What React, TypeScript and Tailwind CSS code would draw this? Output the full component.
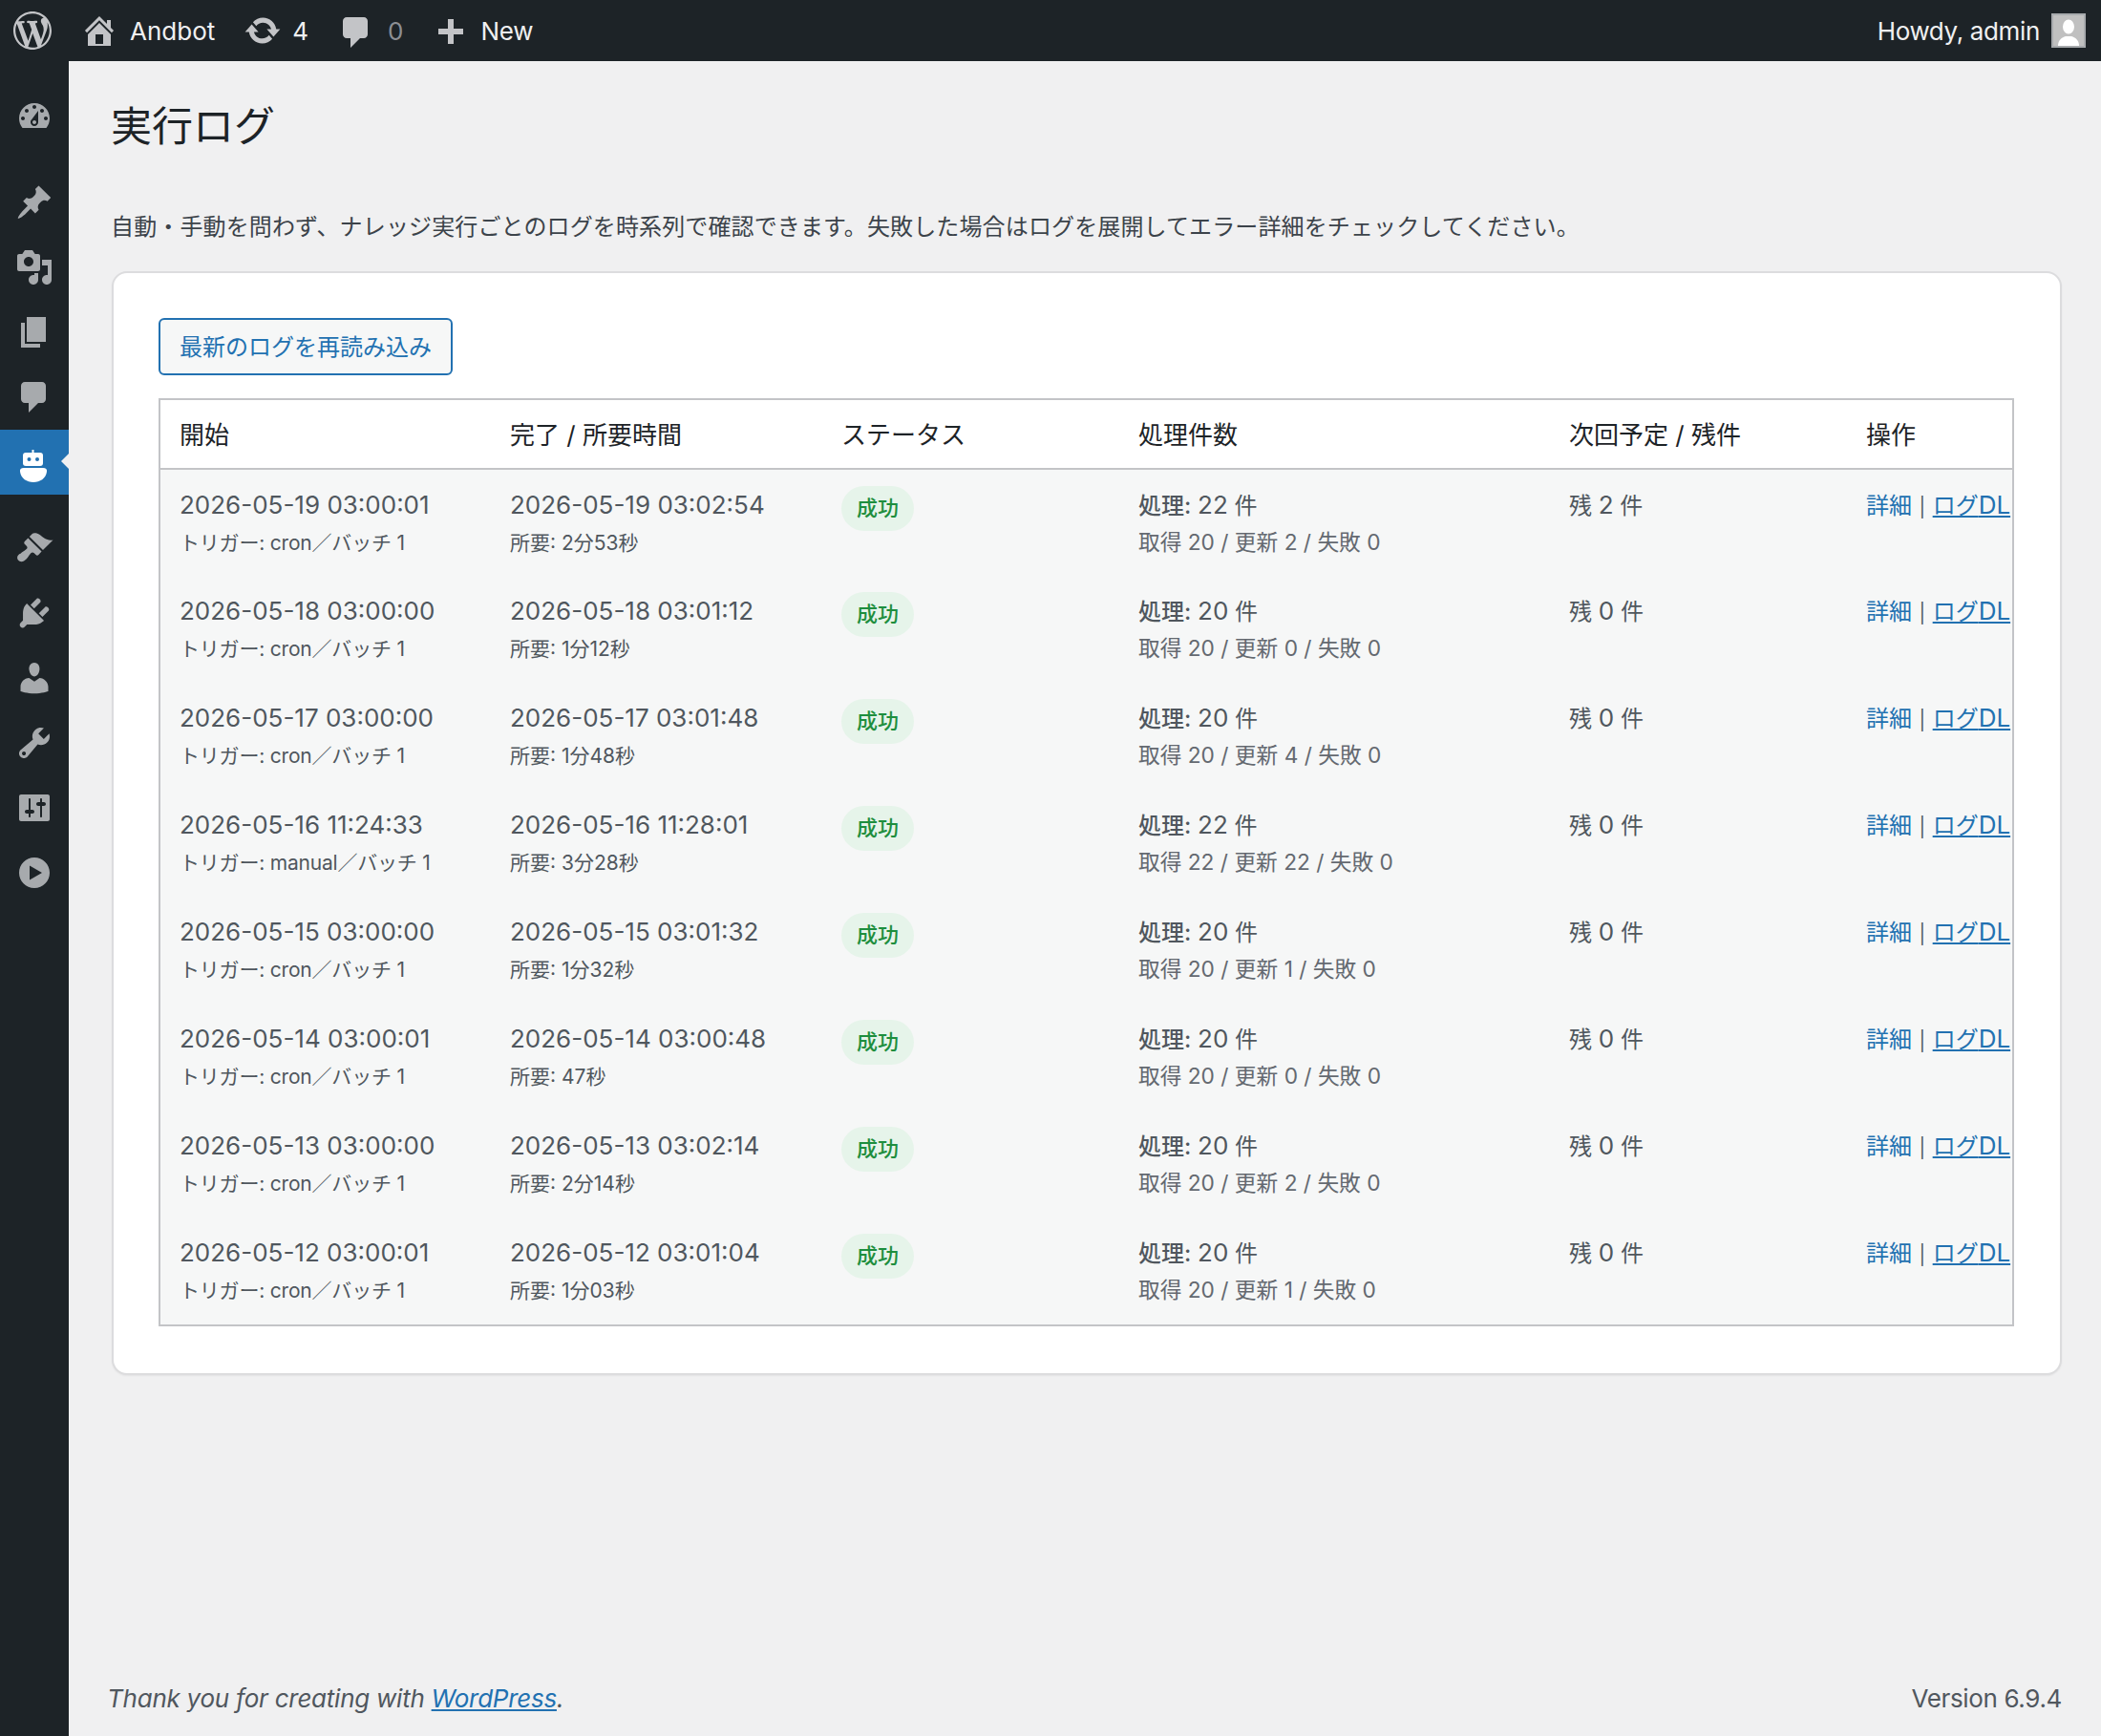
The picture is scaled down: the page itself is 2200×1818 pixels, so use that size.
import type { ReactNode } from 'react'

const DASH = {
  logo: 'M20 10c0-5.51-4.49-10-10-10C4.48 0 0 4.49 0 10c0 5.52 4.48 10 10 10 5.51 0 10-4.48 10-10zM7.78 15.37L4.37 6.22c.55-.02 1.17-.08 1.17-.08.5-.06.44-1.13-.06-1.11 0 0-1.45.11-2.37.11-.18 0-.37 0-.58-.01C4.12 2.69 6.87 1.11 10 1.11c2.33 0 4.45.87 6.05 2.34-.68-.11-1.65.39-1.65 1.58 0 .74.45 1.36.9 2.1.35.61.55 1.36.55 2.46 0 1.49-1.4 5-1.4 5l-3.03-8.37c.54-.02.82-.17.82-.17.5-.05.44-1.25-.06-1.22 0 0-1.44.12-2.38.12-.87 0-2.33-.12-2.33-.12-.5-.03-.56 1.2-.06 1.22l.92.08 1.26 3.41zM17.41 10c.24-.64.74-1.87.43-4.25.7 1.29 1.05 2.71 1.05 4.25 0 3.29-1.73 6.24-4.4 7.78.97-2.59 1.94-5.2 2.92-7.78zM6.1 18.09C3.12 16.65 1.11 13.53 1.11 10c0-1.3.23-2.48.72-3.59C3.25 10.3 4.67 14.2 6.1 18.09zm4.03-6.63l2.58 6.98c-.86.29-1.76.45-2.71.45-.79 0-1.57-.11-2.29-.33.81-2.38 1.62-4.74 2.42-7.1z',
  home: 'M16 8.5l1.53 1.53-1.06 1.06L10 4.62l-6.47 6.47-1.06-1.06L10 2.5l4 4v-2h2v4zm-6-2.46l6 5.99V18H4v-5.97zM12 17v-5H8v5h4z',
  update: 'M10.2 3.28c3.53 0 6.43 2.61 6.92 6h2.08l-3.5 4-3.5-4h2.32c-.45-1.97-2.21-3.45-4.32-3.45-1.45 0-2.73.71-3.54 1.78L4.95 5.66C6.23 4.2 8.11 3.28 10.2 3.28zm-.4 13.44c-3.52 0-6.43-2.61-6.92-6H.8l3.5-4c1.17 1.33 2.33 2.67 3.5 4H5.48c.45 1.97 2.21 3.45 4.32 3.45 1.45 0 2.73-.71 3.54-1.78l1.71 1.95c-1.28 1.46-3.15 2.38-5.25 2.38z',
  comment: 'M5 2h9c1.1 0 2 .9 2 2v7c0 1.1-.9 2-2 2h-2l-5 5v-5H5c-1.1 0-2-.9-2-2V4c0-1.1.9-2 2-2z',
  plus: 'M17 7v3h-5v5H9v-5H4V7h5V2h3v5h5z',
  dashboard: 'M3.76 16h12.48c1.1-1.37 1.76-3.11 1.76-5 0-4.42-3.58-8-8-8s-8 3.58-8 8c0 1.89.66 3.63 1.76 5zM10 4c.55 0 1 .45 1 1s-.45 1-1 1-1-.45-1-1 .45-1 1-1zM6 6c.55 0 1 .45 1 1s-.45 1-1 1-1-.45-1-1 .45-1 1-1zm8 0c.55 0 1 .45 1 1s-.45 1-1 1-1-.45-1-1 .45-1 1-1zm-5.37 5.55L12 7v6c0 1.1-.9 2-2 2s-2-.9-2-2c0-.57.24-1.08.63-1.45zM4 10c.55 0 1 .45 1 1s-.45 1-1 1-1-.45-1-1 .45-1 1-1zm12 0c.55 0 1 .45 1 1s-.45 1-1 1-1-.45-1-1 .45-1 1-1zm-5 3c0-.55-.45-1-1-1s-1 .45-1 1 .45 1 1 1 1-.45 1-1z',
  post: 'M10.44 3.02l1.82-1.82 6.36 6.35-1.83 1.82c-1.05-.68-2.48-.57-3.41.36l-.75.75c-.92.93-1.04 2.35-.35 3.41l-1.83 1.82-2.41-2.41-2.8 2.79c-.42.42-3.38 2.71-3.8 2.29s1.86-3.39 2.28-3.81l2.79-2.79L4.1 9.36l1.83-1.82c1.05.69 2.48.57 3.4-.36l.75-.75c.93-.92 1.05-2.35.36-3.41z',
  media: 'M13 11V4c0-.55-.45-1-1-1h-1.67L9 1H5L3.67 3H2c-.55 0-1 .45-1 1v7c0 .55.45 1 1 1h10c.55 0 1-.45 1-1zM7 4.5c1.38 0 2.5 1.12 2.5 2.5S8.38 9.5 7 9.5 4.5 8.38 4.5 7 5.62 4.5 7 4.5zM14 6h5v10.5c0 1.38-1.12 2.5-2.5 2.5S14 17.88 14 16.5s1.12-2.5 2.5-2.5c.17 0 .34.02.5.05V9h-3V6zm-4 8.05V13h2v3.5c0 1.38-1.12 2.5-2.5 2.5S7 17.88 7 16.5 8.12 14 9.5 14c.17 0 .34.02.5.05z',
  page: 'M6 15V2h10v13H6zm-1 1h8v2H3V5h2v11z',
  appearance: 'M14.48 11.06L7.41 3.99l1.5-1.5c.5-.56 2.3-.47 3.51.32 1.21.8 1.43 1.28 2.91 2.1 1.18.64 2.45 1.26 4.45.85zm-.71.71L6.7 4.7 4.93 6.47c-.39.39-.39 1.02 0 1.41l1.06 1.06c.39.39.39 1.03 0 1.42-.6.6-1.43 1.11-2.21 1.69-.35.26-.7.53-1.01.84C1.43 13.23.5 14.84 1.48 16.25c1.4 1.5 2.97.79 4.3-.54.31-.31.58-.66.84-1.01.58-.78 1.09-1.61 1.69-2.21.39-.39 1.02-.39 1.41 0l1.06 1.06c.39.39 1.02.39 1.41 0z',
  plugins: 'M13.11 4.36L9.87 7.6 8 5.73l3.24-3.24c.35-.34 1.05-.2 1.56.32.52.51.66 1.21.31 1.55zm-8 1.77l.91-1.12 9.01 9.01-1.19.84c-.71.71-2.63 1.16-3.82 1.16H6.14L4.9 17.26c-.59.59-1.54.59-2.12 0-.59-.58-.59-1.53 0-2.12l1.24-1.24v-3.88c0-1.13.4-3.19 1.09-3.89zm7.26 3.97l3.24-3.24c.34-.35 1.04-.21 1.55.31.52.51.66 1.21.31 1.55l-3.24 3.25z',
  users: 'M10 9.25c-2.27 0-2.73-3.44-2.73-3.44C7 4.02 7.82 2 9.97 2c2.16 0 2.98 2.02 2.71 3.81 0 0-.41 3.44-2.68 3.44zm0 2.57L12.72 10c2.39 0 4.52 2.33 4.52 4.53v2.49s-3.65 1.13-7.24 1.13c-3.65 0-7.24-1.13-7.24-1.13v-2.49c0-2.25 1.94-4.48 4.47-4.48z',
  tools: 'M16.68 9.77c-1.34 1.34-3.3 1.67-4.95.99l-5.41 6.52c-.99.99-2.59.99-3.58 0s-.99-2.59 0-3.57l6.52-5.42c-.68-1.65-.35-3.61.99-4.95 1.28-1.28 3.12-1.62 4.72-1.06l-2.89 2.89 2.82 2.82 2.86-2.87c.53 1.58.18 3.39-1.08 4.65zM3.81 16.21c.4.39 1.04.39 1.43 0 .4-.4.4-1.04 0-1.43-.39-.4-1.03-.4-1.43 0-.39.39-.39 1.03 0 1.43z',
  settings: 'M18 16V4c0-.55-.45-1-1-1H3c-.55 0-1 .45-1 1v12c0 .55.45 1 1 1h14c.55 0 1-.45 1-1zM8 11h1c.55 0 1 .45 1 1s-.45 1-1 1H8v1.5c0 .28-.22.5-.5.5s-.5-.22-.5-.5V13H6c-.55 0-1-.45-1-1s.45-1 1-1h1V5.5c0-.28.22-.5.5-.5s.5.22.5.5V11zm5-2h-1c-.55 0-1-.45-1-1s.45-1 1-1h1V5.5c0-.28.22-.5.5-.5s.5.22.5.5V7h1c.55 0 1 .45 1 1s-.45 1-1 1h-1v5.5c0 .28-.22.5-.5.5s-.5-.22-.5-.5V9z',
  play: 'M10 2c4.42 0 8 3.58 8 8s-3.58 8-8 8-8-3.58-8-8 3.58-8 8-8zM7.5 6.2v7.6l6.5-3.8z',
}

const Dash = ({ d, className }: { d: string; className: string }) => (
  <svg viewBox="0 0 20 20" className={className} fill="currentColor" fillRule="evenodd" aria-hidden="true">
    <path d={d} />
  </svg>
)

const RobotIcon = () => (
  <svg viewBox="0 0 40 40" className="h-10 w-10 overflow-visible">
    <rect x="17.500" y="7" width="2" height="4" fill="#fff" />
    <rect x="8" y="10" width="21" height="14" rx="3" fill="#fff" />
    <circle cx="14.500" cy="17" r="2" fill="#2271b1" />
    <circle cx="23" cy="17" r="2" fill="#2271b1" />
    <path d="M9 26h20c3 0 4.500 1.500 4 4C32 37 26 41 19 41S6 37 5 30C4.500 27.500 6 26 9 26z" fill="#fff" />
  </svg>
)

const menuGroups = [
  [DASH.dashboard],
  [DASH.post, DASH.media, DASH.page, DASH.comment, 'robot'],
  [DASH.appearance, DASH.plugins, DASH.users, DASH.tools, DASH.settings, DASH.play],
]

const rows = [
  ['2026-05-19 03:00:01', 'cron', '2026-05-19 03:02:54', '2分53秒', '22', '20', '2', '2'],
  ['2026-05-18 03:00:00', 'cron', '2026-05-18 03:01:12', '1分12秒', '20', '20', '0', '0'],
  ['2026-05-17 03:00:00', 'cron', '2026-05-17 03:01:48', '1分48秒', '20', '20', '4', '0'],
  ['2026-05-16 11:24:33', 'manual', '2026-05-16 11:28:01', '3分28秒', '22', '22', '22', '0'],
  ['2026-05-15 03:00:00', 'cron', '2026-05-15 03:01:32', '1分32秒', '20', '20', '1', '0'],
  ['2026-05-14 03:00:01', 'cron', '2026-05-14 03:00:48', '47秒', '20', '20', '0', '0'],
  ['2026-05-13 03:00:00', 'cron', '2026-05-13 03:02:14', '2分14秒', '20', '20', '2', '0'],
  ['2026-05-12 03:00:01', 'cron', '2026-05-12 03:01:04', '1分03秒', '20', '20', '1', '0'],
]

const Th = ({ children }: { children: ReactNode }) => (
  <th className="pl-5 pt-[2px] text-left text-[26px] leading-[34px] font-normal text-[#1d2327]">{children}</th>
)

// latin runs sit a little larger than the japanese around them
const L = ({ children }: { children: ReactNode }) => <span className="text-[26px]">{children}</span>

const Sidebar = () => (
  <aside className="w-[72px] shrink-0 bg-[#1d2327] pt-6 text-[#a7aaad]">
    {menuGroups.map((group, i) => (
      <div key={i} className="mb-[22px]">
        {group.map((d, j) =>
          d === 'robot' ? (
            <div key={j} className="relative flex h-[68px] items-center justify-center bg-[#2271b1]">
              <RobotIcon />
              <span className="absolute right-0 top-[25px] border-y-[8px] border-r-[8px] border-y-transparent border-r-[#f0f0f1]" />
            </div>
          ) : (
            <div key={j} className="flex h-[68px] items-center justify-center">
              <Dash d={d} className="h-10 w-10" />
            </div>
          ),
        )}
      </div>
    ))}
  </aside>
)

const TopBar = () => (
  <header className="flex h-16 items-center justify-between bg-[#1d2327] pl-[14px] pr-4 text-[26px] text-[#f0f0f1]">
    <div className="flex items-center">
      <Dash d={DASH.logo} className="h-10 w-10 text-[#c3c4c7]" />
      <Dash d={DASH.home} className="ml-[30px] h-10 w-10 text-[#c3c4c7]" />
      <span className="ml-[12px]">Andbot</span>
      <Dash d={DASH.update} className="ml-[30px] h-10 w-10 text-[#c3c4c7]" />
      <span className="ml-[11px]">4</span>
      <Dash d={DASH.comment} className="ml-[30px] mt-1 h-10 w-10 text-[#c3c4c7]" />
      <span className="ml-[13px] text-[#8c8f94]">0</span>
      <Dash d={DASH.plus} className="ml-[29px] mt-2 h-10 w-10 text-[#c3c4c7]" />
      <span className="ml-[12px] tracking-[-0.3px]">New</span>
    </div>
    <div className="flex items-center gap-3">
      <span className="tracking-[-0.35px]">Howdy, admin</span>
      <div className="flex h-9 w-9 items-end justify-center overflow-hidden border-2 border-[#a7aaad] bg-[#c0c0c0]">
        <svg viewBox="0 0 32 32" className="h-8 w-8 text-white" fill="currentColor">
          <ellipse cx="16" cy="12" rx="6" ry="7.500" />
          <path d="M5 32c0-6 4-9 8-10h6c4 1 8 4 8 10z" />
        </svg>
      </div>
    </div>
  </header>
)

export default function App() {
  return (
    <div className="flex min-h-screen flex-col bg-[#f0f0f1] font-['Inter','Noto_Sans_CJK_JP',sans-serif] text-[#3c434a]">
      <TopBar />
      <div className="flex flex-1">
        <Sidebar />
        <main className="flex flex-1 flex-col justify-between pl-[45px] pr-[41px]">
          <div>
            <h1 className="-ml-px mt-[42px] text-[43px] leading-[52px] font-normal text-[#1d2327]">実行ログ</h1>
            <p className="-ml-px mt-[62px] text-[24px] leading-[36px] tracking-[0.13px]">
              自動・手動を問わず、ナレッジ実行ごとのログを時系列で確認できます。失敗した場合はログを展開してエラー詳細をチェックしてください。
            </p>
            <section className="mt-[28px] rounded-2xl border-2 border-[#dcdcde] bg-white pl-[47px] pr-[48px] pt-[47px] pb-[49px] shadow-[0_1px_2px_rgba(0,0,0,0.06)]">
              <button className="block h-[60px] rounded-md border-2 border-[#2271b1] bg-[#f6f7f7] px-5 pt-[2px] text-[24px] leading-none text-[#2271b1]">
                最新のログを再読み込み
              </button>
              <div className="mt-6 border-2 border-[#c3c4c7]">
                <table className="w-full table-fixed border-collapse">
                  <colgroup>
                    <col className="w-[346px]" />
                    <col className="w-[347px]" />
                    <col className="w-[311px]" />
                    <col className="w-[451px]" />
                    <col className="w-[311px]" />
                    <col />
                  </colgroup>
                  <thead>
                    <tr className="h-[72px] border-b-2 border-[#c3c4c7] bg-white">
                      <Th>開始</Th>
                      <Th>完了 / 所要時間</Th>
                      <Th>ステータス</Th>
                      <Th>処理件数</Th>
                      <Th>次回予定 / 残件</Th>
                      <Th>操作</Th>
                    </tr>
                  </thead>
                  <tbody className="bg-[#f6f7f7] text-[#50575e]">
                    {rows.map((r, i) => (
                      <tr key={i} className="h-[112px] align-top">
                        <td className="pl-5 pt-[19px]">
                          <div className="text-[26px] leading-[36px]">{r[0]}</div>
                          <div className="mt-[7px] text-[21px] leading-[30px] tracking-[-0.2px]">トリガー: {r[1]}／バッチ 1</div>
                        </td>
                        <td className="pl-5 pt-[19px]">
                          <div className="text-[26px] leading-[36px]">{r[2]}</div>
                          <div className="mt-[7px] text-[21px] leading-[30px]">所要: {r[3]}</div>
                        </td>
                        <td className="pl-5 pt-[17px]">
                          <span className="inline-flex h-[47px] items-center rounded-full bg-[#e6f4ea] px-4 text-[22px] font-medium text-[#1e8e3e]">成功</span>
                        </td>
                        <td className="pl-5 pt-[19px]">
                          <div className="text-[24px] leading-[36px]"><span className="font-medium">処理:</span> <L>{r[4]}</L> 件</div>
                          <div className="mt-[5px] text-[22.700px] leading-[30px] text-[#646970]">取得 {r[5]} / 更新 {r[6]} / 失敗 0</div>
                        </td>
                        <td className="pl-5 pt-[19px] text-[24px] leading-[36px]">残 <L>{r[7]}</L> 件</td>
                        <td className="pl-5 pt-[19px] text-[24px] leading-[36px] whitespace-nowrap">
                          <a className="text-[#2271b1]">詳細</a>
                          <span className="mx-[7.500px] text-[20px]">|</span>
                          <a className="text-[#2271b1] underline">ログ<L>DL</L></a>
                        </td>
                      </tr>
                    ))}
                  </tbody>
                </table>
              </div>
            </section>
          </div>
          <footer className="flex items-center justify-between pb-[20px] text-[26px] leading-[38px] tracking-[-0.25px] text-[#50575e]">
            <span className="-ml-[5px] italic">Thank you for creating with <a className="text-[#2271b1] underline">WordPress</a>.</span>
            <span className="tracking-[-0.35px]">Version 6.9.4</span>
          </footer>
        </main>
      </div>
    </div>
  )
}
